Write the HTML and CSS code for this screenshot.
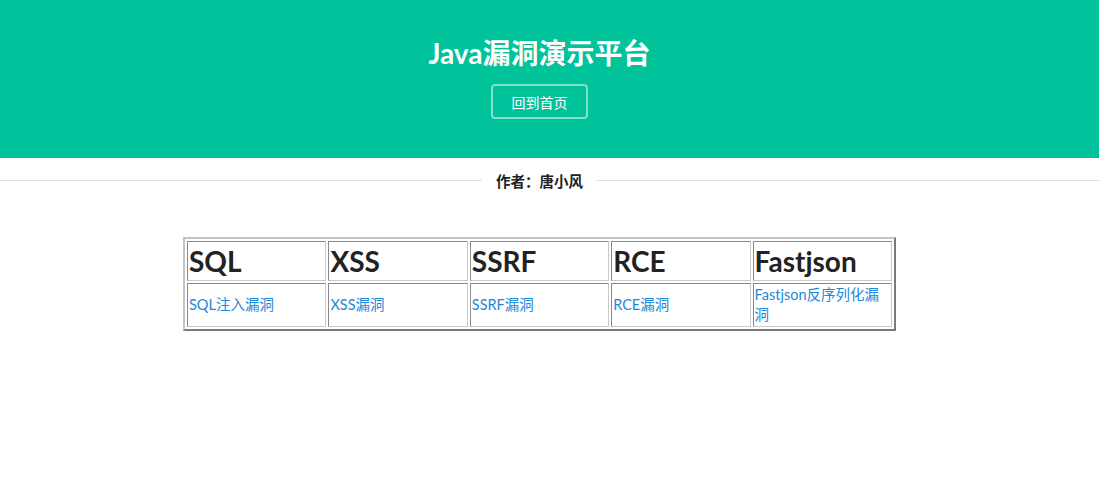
FILE: index.html
```html
<!DOCTYPE html>
<html lang="zh">
<head>
<meta charset="utf-8">
<title>Java漏洞演示平台</title>
<link rel="stylesheet" href="styles.css">
</head>
<body>
<header class="hero">
  <h1 class="hero-title">Java漏洞演示平台</h1>
  <a class="hero-btn" href="#">回到首页</a>
</header>
<div class="author">
  <span class="author-text">作者：唐小风</span>
</div>
<div class="table-wrap">
  <table class="vuln-table">
    <tr>
      <th>SQL</th><th>XSS</th><th>SSRF</th><th>RCE</th><th>Fastjson</th>
    </tr>
    <tr>
      <td><a href="#">SQL注入漏洞</a></td>
      <td><a href="#">XSS漏洞</a></td>
      <td><a href="#">SSRF漏洞</a></td>
      <td><a href="#">RCE漏洞</a></td>
      <td><a href="#">Fastjson反序列化漏洞</a></td>
    </tr>
  </table>
</div>
</body>
</html>
```
FILE: styles.css
```css
html, body {
  margin: 0;
  padding: 0;
  background: #fff;
  font-family: Lato, "Noto Sans CJK SC", sans-serif;
  color: #222;
}
.hero {
  background: #00c29b;
  height: 158px;
  display: flex;
  flex-direction: column;
  align-items: center;
  padding-right: 20px;
  box-sizing: border-box;
}
.hero-title {
  margin: 35px 0 0;
  font-size: 28px;
  line-height: 36px;
  font-weight: 700;
  color: #fff;
}
.hero-btn {
  margin-top: 13px;
  width: 97px;
  height: 35px;
  box-sizing: border-box;
  border: 2px solid rgba(255,255,255,0.5);
  border-radius: 4px;
  color: #fff;
  text-decoration: none;
  font-size: 14px;
  display: flex;
  align-items: center;
  justify-content: center;
}
.author {
  margin-top: 12px;
  display: flex;
  align-items: center;
  height: 20px;
}
.author::before, .author::after {
  content: "";
  height: 1px;
  background: #e0e0e0;
}
.author::before { flex: 0 0 482px; }
.author::after { flex: 1; }
.author-text {
  padding: 0 14px;
  font-size: 14.5px;
  font-weight: 700;
  color: #222;
}
.table-wrap {
  display: flex;
  justify-content: center;
  padding-right: 20px;
  margin-top: 47px;
}
.vuln-table {
  width: 713px;
  border-spacing: 2px;
  table-layout: fixed;
  border: 2px solid;
  border-color: #c4c4c4 #7a7a7a #7a7a7a #c4c4c4;
}
.vuln-table th, .vuln-table td {
  border: 1px solid;
  border-color: #888 #c8c8c8 #c8c8c8 #888;
  padding: 1px;
}
.vuln-table th {
  text-align: left;
  font-size: 28px;
  font-weight: 700;
  height: 36px;
  color: #222;
}
.vuln-table td {
  font-size: 14.5px;
  height: 40px;
  vertical-align: middle;
  line-height: 20px;
}
.vuln-table a {
  color: #1e88d8;
  text-decoration: none;
}
```
